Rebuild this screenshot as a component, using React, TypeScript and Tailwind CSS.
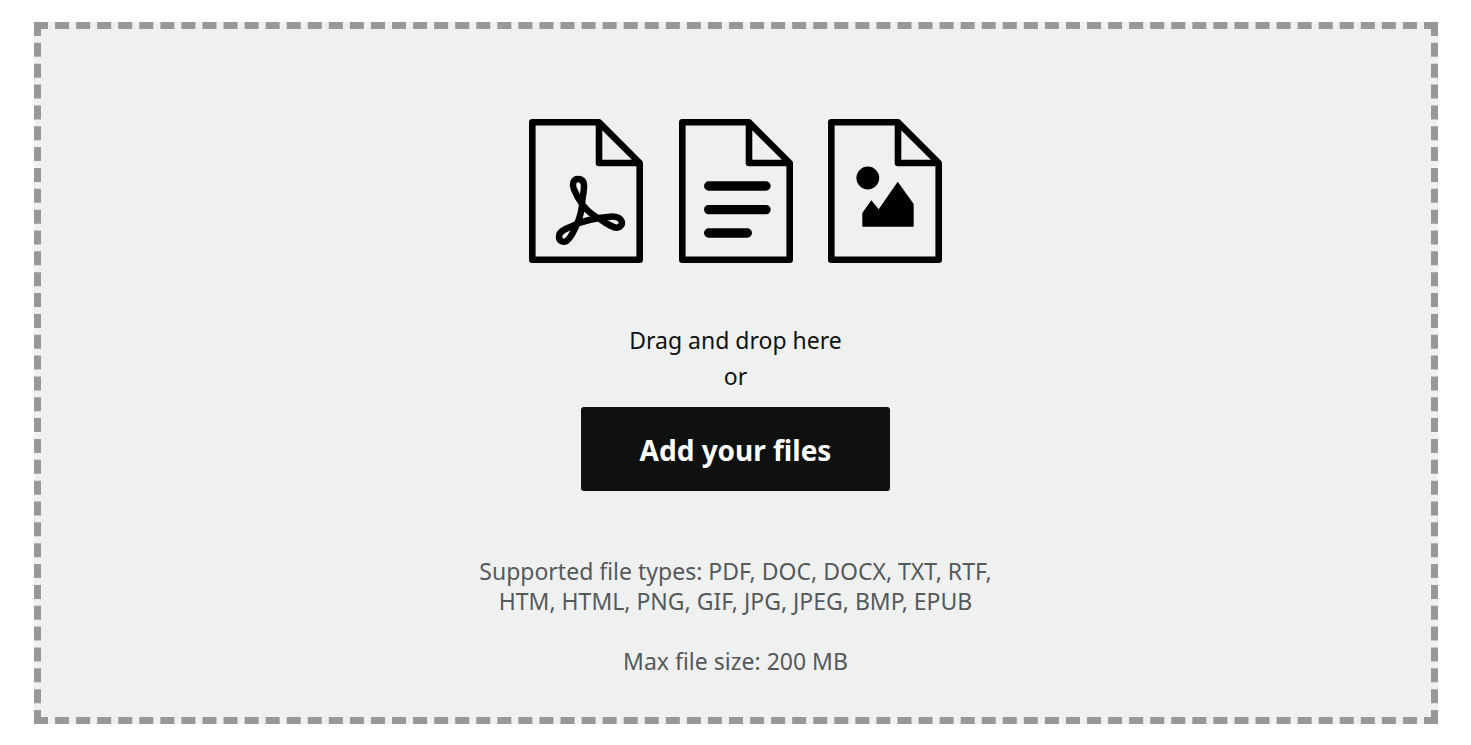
import React from 'react';

const Page = ({ children }: { children: React.ReactNode }) => (
  <svg width="114" height="144" viewBox="0 0 114 144" fill="none" aria-hidden="true">
    <path
      d="M70 3.3H3.3V140.7H110.7V44ZV44H110.7"
      stroke="#000"
      strokeWidth="6.6"
      strokeLinejoin="round"
    />
    {children}
  </svg>
);

const PdfFile = () => (
  <Page>
    <path
      transform="translate(-9 -9) scale(.3333)"
      d="M174 207C160 207 156 222 161 236C168 254 178 272 190 287C204 304 222 318 240 327C258 340 275 353 290 353C302 353 308 342 305 334C300 322 285 319 270 320C235 323 190 331 160 347C140 355 117 362 117 380C117 392 128 398 138 394C153 386 160 365 170 345C180 322 187 295 187 270C190 250 193 235 192 225C191 213 184 207 174 207Z"
      stroke="#000"
      strokeWidth="19.5"
      strokeLinejoin="round"
    />
  </Page>
);

const TextFile = () => (
  <Page>
    <path d="M29.7 67H87M29.7 90.6H87M29.7 114H68.3" stroke="#000" strokeWidth="9.4" strokeLinecap="round" />
  </Page>
);

const ImageFile = () => (
  <Page>
    <circle cx="39.8" cy="59" r="11.4" fill="#000" />
    <path d="M34.3 107.7V94L43.3 81.3L50.7 90.3L69.7 62.7L85.7 85V107.7Z" fill="#000" />
  </Page>
);

const App = () => {
  const icons = [PdfFile, TextFile, ImageFile];

  return (
    <main className="bg-white pt-[22px] pb-[21px] pl-[34px] pr-[33px] font-['Noto_Sans',sans-serif]">
      <section className="flex flex-col items-center border-[7px] border-dashed border-[#979998] bg-[#eff1f1] pt-[90px] pr-px pb-[41px] text-center">
        <div className="flex w-[413px] justify-between">
          {icons.map((Icon, index) => (
            <Icon key={index} />
          ))}
        </div>

        <div className="mt-[59px] text-[23px] leading-9 text-[#0f1111]">
          <p>Drag and drop here</p>
          <p>or</p>
        </div>

        <button
          type="button"
          className="mt-[13px] h-[84px] w-[309px] rounded-[3px] bg-[#0f1111] pt-0.5 text-[28px] font-bold text-white"
        >
          Add your files
        </button>

        {/* Upload limits */}
        <div className="mt-[65px] text-[23px] leading-[30px] text-[#565959]">
          <p>
            Supported file types: PDF, DOC, DOCX, TXT, RTF,
            <br />
            HTM, HTML, PNG, GIF, JPG, JPEG, BMP, EPUB
          </p>
          <p className="mt-[30px]">Max file size: 200 MB</p>
        </div>
      </section>
    </main>
  );
};

export default App;
